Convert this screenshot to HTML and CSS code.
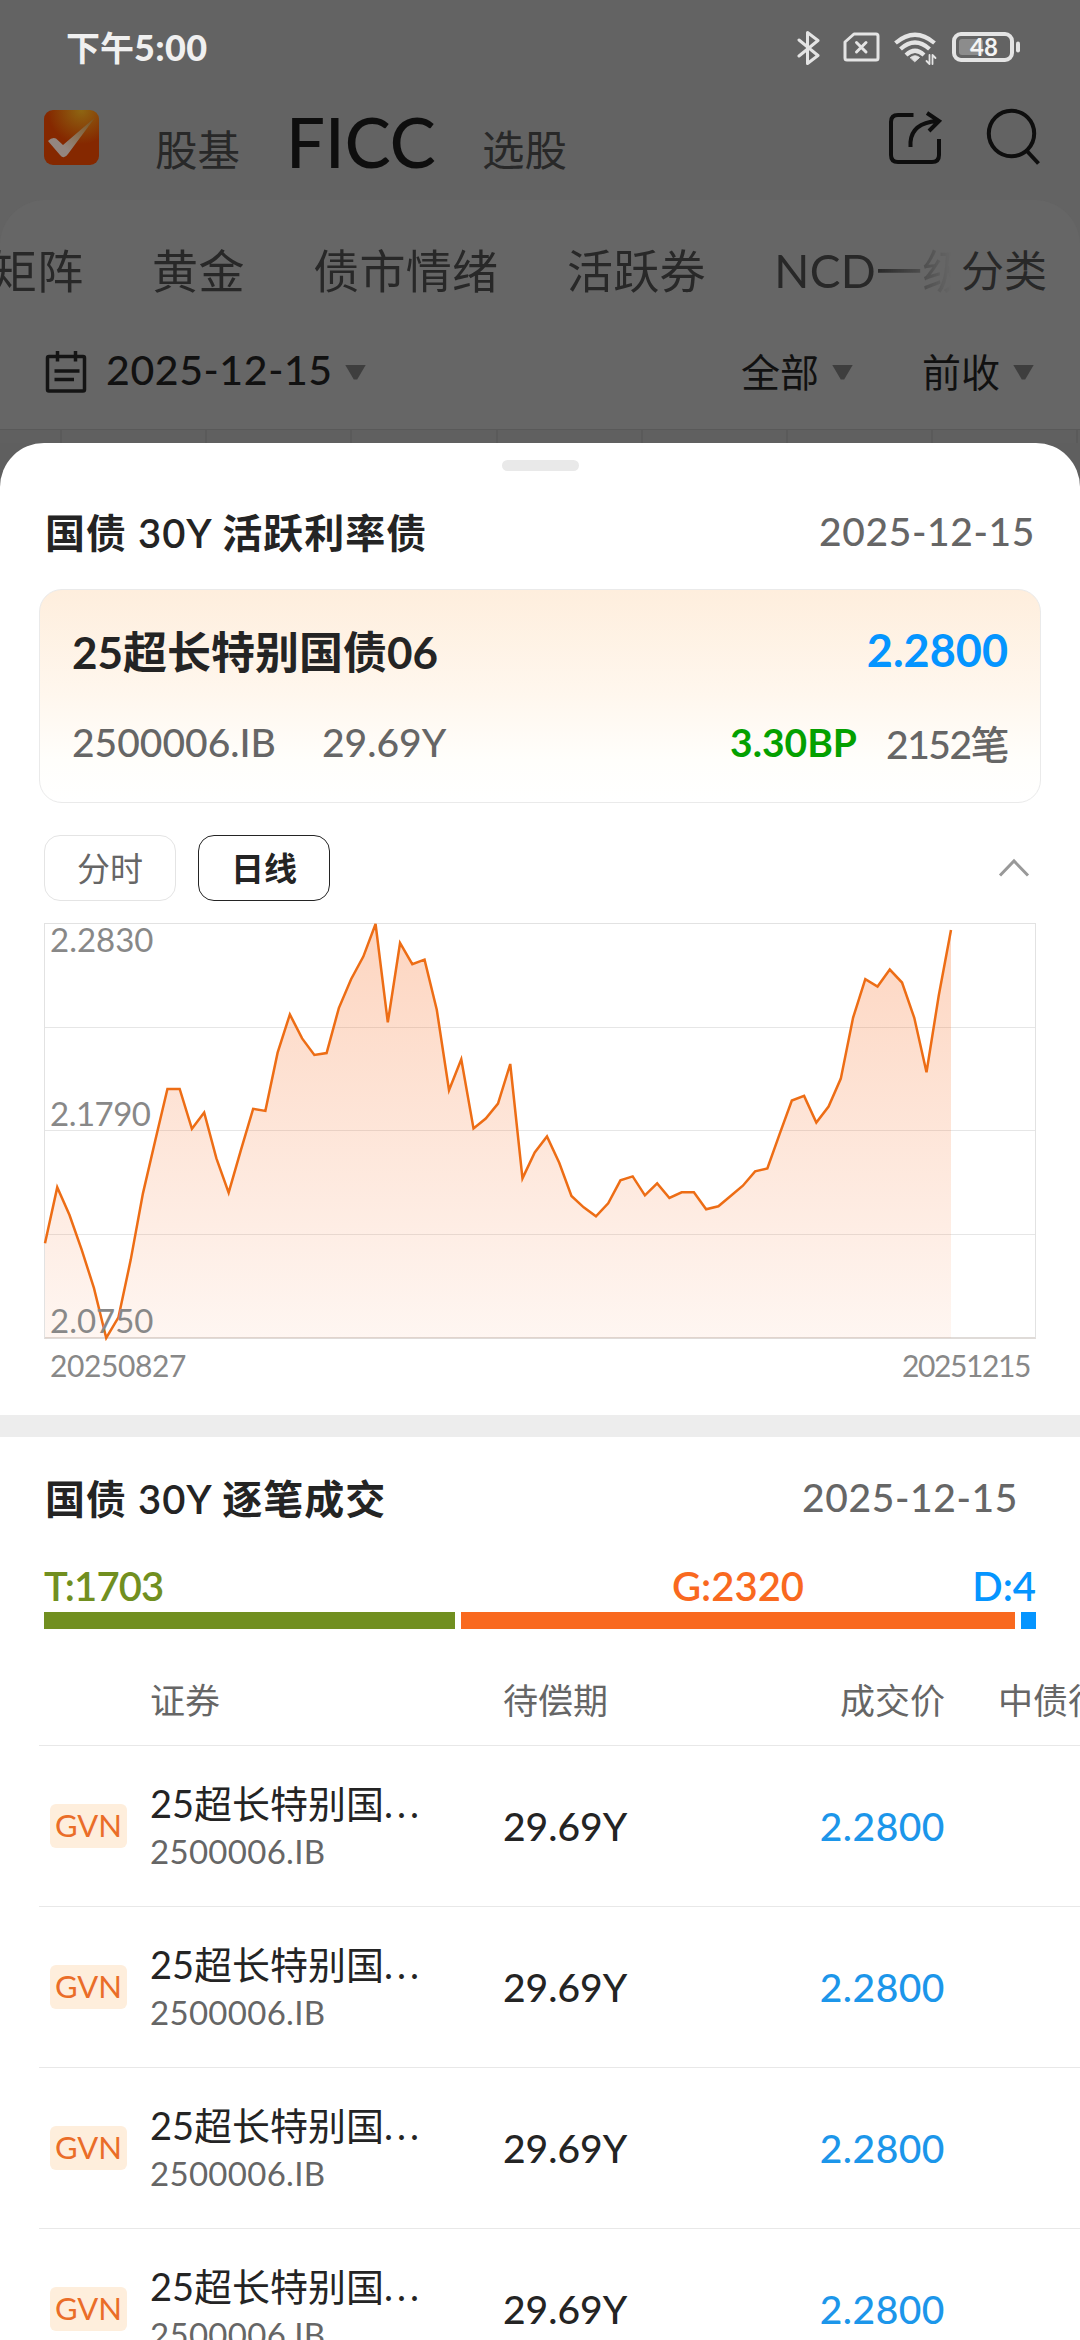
FILE: index.html
```html
<!DOCTYPE html>
<html lang="zh-CN">
<head>
  <meta charset="UTF-8">
  <meta name="viewport" content="width=device-width, initial-scale=1.0">
  <title>FICC</title>
  <link rel="stylesheet" href="styles.css">
</head>
<body>

  <!-- Dimmed page behind the sheet -->
  <div class="page">
    <div class="status-bar">
      <span class="clock">下午<b>5:00</b></span>
      <svg class="status-icons" width="226" height="40" viewBox="0 0 226 40" fill="none" stroke="#e4e4e4" stroke-width="3" stroke-linecap="round" stroke-linejoin="round">
        <path d="M2 12 L21 27.500 L10.500 35.500 V4.500 L21 12.500 L2 28"/>
        <path d="M57 6 H79 Q81 6 81 8 V30 Q81 32 79 32 H50 Q48 32 48 30 V14 Z"/>
        <path d="M59.500 14.500 L69 24 M69 14.500 L59.500 24"/>
        <g stroke-width="4.200" stroke-linecap="butt">
          <path d="M98.500 15 Q118 -1.500 137.500 15"/>
          <path d="M103.500 21 Q118 8 132.500 21"/>
          <path d="M109 27 Q118 18.500 127 27"/>
        </g>
        <path d="M113.500 29.500 Q118 26 122.500 29.500 L118 33.500 Z" fill="#e4e4e4" stroke-width="1"/>
        <path d="M132.500 27 V36 L129.500 33 M135.500 36 V27 L138.500 30" stroke-width="1.800"/>
        <rect x="157" y="6" width="58" height="26" rx="7" stroke-width="4"/>
        <rect x="162" y="11" width="24" height="16" rx="3" fill="#8c8c8c" stroke="none"/>
        <path d="M221 15.500 V22.500" stroke-width="4"/>
        <text class="battery-text" x="173" y="28">48</text>
      </svg>
    </div>

    <header>
      <svg class="logo" width="55" height="55" viewBox="0 0 55 55">
        <defs>
          <radialGradient id="logoBg" cx="0.68" cy="0" r="0.62">
            <stop offset="0" stop-color="#8e6612"/>
            <stop offset="1" stop-color="#852800"/>
          </radialGradient>
          <linearGradient id="tick" x1="0" y1="1" x2="1" y2="0">
            <stop offset="0.300" stop-color="#938680"/>
            <stop offset="1" stop-color="#7b5218"/>
          </linearGradient>
        </defs>
        <rect width="55" height="55" rx="9" fill="url(#logoBg)"/>
        <path d="M4 31 Q8 27 12 28.500 L19 35 L51 7.500 L24 44 Q20 50 16 45 Z" fill="url(#tick)"/>
      </svg>
      <span class="nav-item nav-first">股基</span>
      <span class="nav-item nav-active">FICC</span>
      <span class="nav-item nav-last">选股</span>
      <svg class="share-icon" width="56" height="56" viewBox="0 0 56 56" fill="none" stroke="#0e0e0e" stroke-width="4">
        <path d="M26.500 5 H11 Q4 5 4 12 V45 Q4 52 11 52 H45 Q52 52 52 45 V29"/>
        <path d="M23.500 37 V32 Q25 13 50 11 M40 3 L52 11 L42 21"/>
      </svg>
      <svg class="search-icon" width="56" height="60" viewBox="0 0 56 60" fill="none" stroke="#0e0e0e" stroke-width="4">
        <circle cx="25.500" cy="26.500" r="22.700"/>
        <path d="M40 43 L52.500 56.500"/>
      </svg>
    </header>

    <div class="panel">
      <nav>
        <div class="tabs">
          <span>矩阵</span>
          <span>黄金</span>
          <span>债市情绪</span>
          <span>活跃券</span>
          <span>NCD一级</span>
        </div>
        <span class="category">分类</span>
      </nav>

      <div class="filters">
        <svg width="42" height="44" viewBox="0 0 42 44" fill="none" stroke="#141414" stroke-width="3.500">
          <rect x="2.500" y="6.500" width="37" height="34.500" rx="1.500"/>
          <path d="M12.500 1 V11.500 M30.500 1 V11.500 M9.500 21 H34.500 M9.500 29.500 H29"/>
        </svg>
        <span class="filter-date">2025-12-15</span>
        <i class="arrow"></i>
        <span class="filter-all">全部</span>
        <i class="arrow"></i>
        <span class="filter-prev">前收</span>
        <i class="arrow"></i>
      </div>
      <div class="grid-head"></div>
    </div>
  </div>

  <!-- Bottom sheet -->
  <main class="sheet">
    <div class="handle"></div>

    <div class="section-title">
      <h2>国债 30Y 活跃利率债</h2>
      <span class="date">2025-12-15</span>
    </div>

    <div class="card">
      <div class="card-top">
        <span class="bond-name">25超长特别国债06</span>
        <span class="bond-price">2.2800</span>
      </div>
      <div class="card-bottom">
        <span>2500006.IB</span>
        <span class="term">29.69Y</span>
        <b class="change">3.30BP</b>
        <span class="count">2152笔</span>
      </div>
    </div>

    <div class="chart-tabs">
      <button>分时</button>
      <button class="active">日线</button>
      <svg width="32" height="20" viewBox="0 0 32 20" fill="none" stroke="#999" stroke-width="3">
        <path d="M2 17.500 L16 3 L30 17.500"/>
      </svg>
    </div>

    <div class="chart">
      <!-- x: trading day, y: distance from the top price -->
      <svg class="chart-line" viewBox="0 0 74 1245" preserveAspectRatio="none">
        <defs>
          <linearGradient id="area" x1="0" y1="0" x2="0" y2="1">
            <stop offset="0" stop-color="#f7691e" stop-opacity="0.280"/>
            <stop offset="1" stop-color="#f7691e" stop-opacity="0.060"/>
          </linearGradient>
        </defs>
        <polygon fill="url(#area)" points="0,1245 0,960 1,792 2,875 3,980 4,1095 5,1245 6,1183 7,1010 8,810 9,652 10,496 11,496 12,616 13,567 14,705 15,808 16,680 17,556 18,562 19,387 20,272 21,344 22,394 23,388 24,253 25,166 26,98 27,0 28,296 29,57 30,121 31,107 32,258 33,500 34,407 35,615 36,585 37,540 38,421 39,765 40,687 41,639 42,718 43,818 44,852 45,879 46,840 47,771 48,759 49,816 50,780 51,824 52,807 53,807 54,858 55,849 56,818 57,787 58,744 59,735 60,632 61,531 62,517 63,597 64,549 65,465 66,282 67,166 68,188 69,137 70,176 71,282 72,446 73,215 74,18 74,1245"/>
        <polyline fill="none" stroke="#ed6d15" stroke-width="2.500" vector-effect="non-scaling-stroke" points="0,960 1,792 2,875 3,980 4,1095 5,1245 6,1183 7,1010 8,810 9,652 10,496 11,496 12,616 13,567 14,705 15,808 16,680 17,556 18,562 19,387 20,272 21,344 22,394 23,388 24,253 25,166 26,98 27,0 28,296 29,57 30,121 31,107 32,258 33,500 34,407 35,615 36,585 37,540 38,421 39,765 40,687 41,639 42,718 43,818 44,852 45,879 46,840 47,771 48,759 49,816 50,780 51,824 52,807 53,807 54,858 55,849 56,818 57,787 58,744 59,735 60,632 61,531 62,517 63,597 64,549 65,465 66,282 67,166 68,188 69,137 70,176 71,282 72,446 73,215 74,18"/>
      </svg>
      <span class="y-label y-top">2.2830</span>
      <span class="y-label y-mid">2.1790</span>
      <span class="y-label y-low">2.0750</span>
    </div>
    <div class="x-labels">
      <span>20250827</span>
      <span class="x-end">20251215</span>
    </div>

    <div class="divider"></div>

    <div class="section-title deals-title">
      <h2>国债 30Y 逐笔成交</h2>
      <span class="date">2025-12-15</span>
    </div>

    <div class="ratio">
      <div class="part taken"><span>T:1703</span></div>
      <div class="part given"><span>G:2320</span></div>
      <div class="part done"><span>D:4</span></div>
    </div>

    <div class="table">
      <div class="row row-head">
        <span></span>
        <span>证券</span>
        <span>待偿期</span>
        <span class="right">成交价</span>
        <span class="yield">中债行权</span>
      </div>
      <div class="row">
        <span class="tag">GVN</span>
        <div class="bond"><p>25超长特别国<i>...</i></p><small>2500006.IB</small></div>
        <span class="num">29.69Y</span>
        <span class="num price right">2.2800</span>
      </div>
      <div class="row">
        <span class="tag">GVN</span>
        <div class="bond"><p>25超长特别国<i>...</i></p><small>2500006.IB</small></div>
        <span class="num">29.69Y</span>
        <span class="num price right">2.2800</span>
      </div>
      <div class="row">
        <span class="tag">GVN</span>
        <div class="bond"><p>25超长特别国<i>...</i></p><small>2500006.IB</small></div>
        <span class="num">29.69Y</span>
        <span class="num price right">2.2800</span>
      </div>
      <div class="row">
        <span class="tag">GVN</span>
        <div class="bond"><p>25超长特别国<i>...</i></p><small>2500006.IB</small></div>
        <span class="num">29.69Y</span>
        <span class="num price right">2.2800</span>
      </div>
    </div>
  </main>

</body>
</html>
```

FILE: styles.css
```css
* {
  box-sizing: border-box;
}

body {
  margin: 0;
  width: 1080px;
  height: 2340px;
  overflow: hidden;
  background-color: #5f5f5f;
  font-family: Lato, 'Noto Sans CJK SC', sans-serif;
  color: #242424;
}

h2, p {
  margin: 0;
}

span, b {
  white-space: nowrap;
}

/* Dimmed page */
.page {
  height: 443px;
  background-color: #636363;
}

.status-bar {
  height: 96px;
  padding: 0 57px 0 66px;
  display: flex;
  align-items: center;
  justify-content: space-between;
}

.clock {
  color: #f0f0f0;
  font-size: 34px;
  font-weight: 600;
  line-height: 40px;
  margin-bottom: 2px;
}

.clock b {
  font-size: 36px;
  letter-spacing: 0.4px;
}

.battery-text {
  font-size: 24px;
  font-weight: bold;
  fill: #f4f4f4;
  stroke: none;
}

header {
  height: 104px;
  padding-left: 44px;
  display: flex;
}

.logo {
  margin-top: 14px;
}

.nav-item {
  font-size: 42.5px;
  line-height: 60px;
  margin-top: 24px;
  color: #282828;
}

.nav-first {
  margin-left: 56px;
}

.nav-active {
  width: 150px;
  margin: 16px 0 0 46px;
  font-size: 69px;
  font-weight: 500;
  color: #0e0e0e;
}

.nav-last {
  margin-left: 46px;
}

.share-icon {
  margin: 14px 0 0 auto;
}

.search-icon {
  margin: 11px 38px 0 43px;
}

.panel {
  height: 243px;
  background-color: #666;
  border-radius: 45px 45px 0 0;
}

nav {
  display: flex;
  height: 142px;
  line-height: 142px;
  color: #282828;
}

.tabs {
  display: flex;
  gap: 68.5px;
  width: 961px;
  margin-left: -9px;
  overflow: hidden;
  font-size: 46px;
  letter-spacing: 0.3px;
  -webkit-mask-image: linear-gradient(to right, #000 885px, transparent 960px);
  mask-image: linear-gradient(to right, #000 885px, transparent 960px);
}

.category {
  margin-left: 9px;
  font-size: 43px;
}

.filters {
  display: flex;
  align-items: center;
  height: 60px;
  padding: 0 46px 0 45px;
  font-size: 39px;
  color: #111;
}

.filters span {
  margin-bottom: 5px;
}

.filter-date {
  margin-left: 19px;
  width: 226px;
  font-size: 41px;
  font-weight: 500;
  letter-spacing: 0.6px;
}

.arrow {
  width: 21px;
  height: 15px;
  margin-left: 13px;
  background-color: #3e3e3e;
  clip-path: polygon(0 0, 100% 0, 58% 100%, 42% 100%);
}

.filter-all {
  margin-left: auto;
}

.filter-prev {
  margin-left: 69px;
}

.grid-head {
  height: 14px;
  margin-top: 27px;
  border-top: 1px solid #595959;
  background: repeating-linear-gradient(to right, #5a5a5a 0, #5a5a5a 2px, #606060 2px, #606060 145.200px) 60px 0;
}

/* Bottom sheet */
.sheet {
  height: 1897px;
  padding-top: 17px;
  overflow: hidden;
  background-color: #fff;
  border-radius: 44px 44px 0 0;
}

.handle {
  width: 77px;
  height: 11px;
  margin: 0 auto;
  border-radius: 6px;
  background-color: #e9e9e9;
}

.section-title {
  display: flex;
  justify-content: space-between;
  align-items: center;
  height: 60px;
  margin: 32px 45px 0;
  padding-bottom: 4px;
}

h2 {
  font-size: 40px;
  font-weight: 600;
  letter-spacing: 1px;
}

.date {
  font-size: 39px;
  font-weight: 500;
  letter-spacing: 0.6px;
  color: #666;
}

.card {
  width: 1002px;
  height: 214px;
  margin: 26px auto 0;
  padding: 28px 32px 0;
  border: 1px solid #eaeaea;
  border-radius: 23px;
  background: linear-gradient(#feeedd, #fff7ee 50%, #fffefb 80%, #fff);
}

.card-top, .card-bottom {
  display: flex;
  justify-content: space-between;
  align-items: center;
  height: 64px;
}

.bond-name {
  font-size: 44px;
  font-weight: 700;
}

.bond-price {
  font-size: 45px;
  font-weight: 700;
  color: #0595ff;
}

.card-bottom {
  margin-top: 28px;
  font-size: 39px;
  font-weight: 500;
  color: #666;
}

.term {
  margin-left: 46px;
}

.change {
  margin: 0 29px 0 auto;
  color: #04a000;
}

.count {
  letter-spacing: -1.5px;
}

.chart-tabs {
  display: flex;
  align-items: center;
  gap: 22px;
  margin: 32px 50px 0 44px;
}

.chart-tabs button {
  width: 132px;
  height: 66px;
  padding: 0 0 2px;
  border: 1px solid #e4e4e4;
  border-radius: 16px;
  background-color: #fff;
  font-family: inherit;
  font-size: 33px;
  color: #666;
}

.chart-tabs .active {
  border-color: #242424;
  font-weight: bold;
  color: #242424;
}

.chart-tabs svg {
  margin-left: auto;
}

.chart {
  position: relative;
  width: 992px;
  height: 416px;
  margin: 22px 0 0 44px;
  border: 1px solid #e2e2e2;
  border-bottom: 2px solid #dfdbd8;
  background: repeating-linear-gradient(transparent 0, transparent 102.700px, #e6e6e6 102.700px, #e6e6e6 103.700px);
}

.chart-line {
  display: block;
  width: 906px;
  height: 414px;
  overflow: visible;
}

.y-label {
  position: absolute;
  left: 5px;
  font-size: 33px;
  line-height: 40px;
  color: #888;
}

.y-top {
  top: -5px;
}

.y-mid {
  top: 169px;
  letter-spacing: -0.5px;
}

.y-low {
  top: 376px;
}

.x-labels {
  display: flex;
  justify-content: space-between;
  height: 76px;
  padding: 6px 50px 0;
  font-size: 30px;
  line-height: 40px;
  letter-spacing: -0.4px;
  color: #888;
}

.x-end {
  letter-spacing: -1.4px;
}

.divider {
  height: 22px;
  background-color: #ededed;
}

.deals-title {
  margin-right: 62px;
}

/* Taken / given / done split */
.ratio {
  display: flex;
  gap: 6px;
  margin: 35px 44px 0;
  font-size: 40px;
  font-weight: 600;
  line-height: 48px;
}

.part {
  border-bottom: 17px solid;
}

.part span {
  display: block;
  margin: -2px 0 2px;
}

.taken {
  width: 411px;
  letter-spacing: -0.9px;
  color: #718f20;
}

.given {
  width: 554px;
  color: #f9691f;
  text-align: center;
}

.done {
  width: 15px;
  color: #0595ff;
}

.done span {
  float: right;
}

/* Deals table */
.table {
  margin-left: 39px;
}

.row {
  display: grid;
  grid-template-columns: 111px 353px 232px 210px 200px;
  align-items: center;
  height: 161px;
  border-bottom: 1px solid #e8e8e8;
}

.row-head {
  height: 117px;
  padding-top: 22px;
  font-size: 35px;
  color: #666;
}

.right {
  text-align: right;
}

.yield {
  margin-left: 53px;
}

.tag {
  width: 77px;
  height: 44px;
  margin-left: 11px;
  border-radius: 6px;
  background-color: #feeedc;
  color: #ea6d28;
  font-size: 31px;
  line-height: 43px;
  text-align: center;
}

.bond p {
  font-size: 38px;
  line-height: 50px;
}

.bond i {
  font-style: normal;
  letter-spacing: 4px;
}

.bond small {
  display: block;
  font-size: 33px;
  line-height: 46px;
  letter-spacing: 0.3px;
  color: #666;
}

.num {
  font-size: 39px;
  font-weight: 500;
}

.price {
  letter-spacing: 0.5px;
  color: #1c96ea;
}
```
